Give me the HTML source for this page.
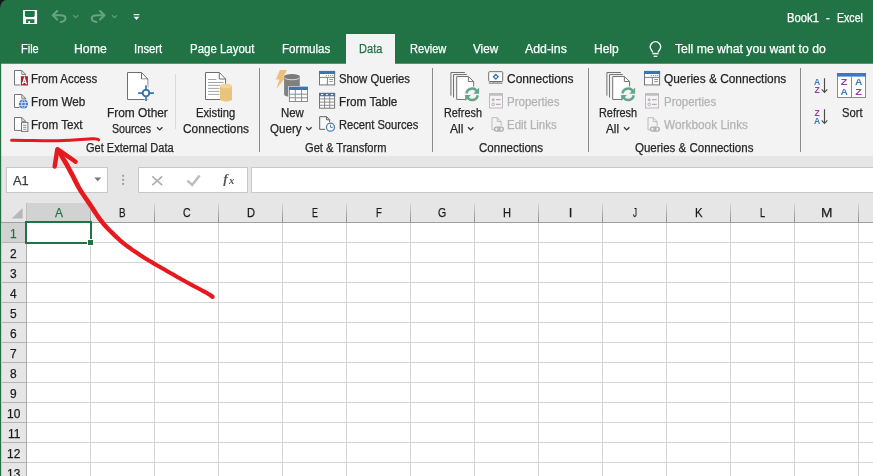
<!DOCTYPE html>
<html><head><meta charset="utf-8"><title>Book1 - Excel</title>
<style>
html,body{margin:0;padding:0;}
#txt{position:absolute;left:0;top:0;width:873px;height:476px;will-change:transform;}
body{width:873px;height:476px;position:relative;overflow:hidden;background:#fff;font-family:"Liberation Sans",sans-serif;}
.t{position:absolute;white-space:nowrap;line-height:16px;transform-origin:0 0;font-family:"Liberation Sans",sans-serif;-webkit-text-stroke:0.25px;}
svg{position:absolute;left:0;top:0;}
</style></head><body>
<div style="position:absolute;left:0px;top:0px;width:873px;height:63px;background:#217346;"></div>
<div style="position:absolute;left:0px;top:63px;width:873px;height:1px;background:#569371;"></div>
<div style="position:absolute;left:0px;top:64px;width:873px;height:92px;background:#f3f3f3;"></div>
<div style="position:absolute;left:0px;top:156px;width:873px;height:47px;background:#e6e6e6;"></div>
<div style="position:absolute;left:0px;top:203px;width:873px;height:273px;background:#ffffff;"></div>
<div style="position:absolute;left:346px;top:34px;width:49px;height:31px;background:#f3f3f3;"></div>
<div style="position:absolute;left:259px;top:68px;width:1px;height:84px;background:#8a8a8a;"></div>
<div style="position:absolute;left:432px;top:68px;width:1px;height:84px;background:#8a8a8a;"></div>
<div style="position:absolute;left:588px;top:68px;width:1px;height:84px;background:#8a8a8a;"></div>
<div style="position:absolute;left:800px;top:68px;width:1px;height:84px;background:#8a8a8a;"></div>
<div style="position:absolute;left:175px;top:74px;width:1px;height:55px;background:#dadada;"></div>
<div style="position:absolute;left:6px;top:167px;width:102px;height:26px;background:#fff;box-sizing:border-box;border:1px solid #c8c8c8;"></div>
<div style="position:absolute;left:138px;top:167px;width:110px;height:26px;background:#fff;box-sizing:border-box;border:1px solid #c8c8c8;"></div>
<div style="position:absolute;left:251px;top:167px;width:630px;height:26px;background:#fff;box-sizing:border-box;border:1px solid #c8c8c8;"></div>
<div style="position:absolute;left:0px;top:203px;width:873px;height:19px;background:#e6e6e6;"></div>
<div style="position:absolute;left:0px;top:222px;width:27px;height:254px;background:#e6e6e6;"></div>
<div style="position:absolute;left:27px;top:203px;width:63px;height:19px;background:#d2d2d2;"></div>
<div style="position:absolute;left:2px;top:223px;width:24px;height:19px;background:#d2d2d2;"></div>
<div style="position:absolute;left:0px;top:222px;width:873px;height:1px;background:#9f9f9f;"></div>
<div style="position:absolute;left:26px;top:203px;width:1px;height:19px;background:#c0c0c0;"></div>
<div style="position:absolute;left:26px;top:223px;width:1px;height:253px;background:#aeaeae;"></div>
<div style="position:absolute;left:90px;top:203px;width:1px;height:19px;background:#b4b4b4;background:linear-gradient(#dadada,#8e8e8e);"></div>
<div style="position:absolute;left:90px;top:223px;width:1px;height:253px;background:#d4d4d4;"></div>
<div style="position:absolute;left:154px;top:203px;width:1px;height:19px;background:#b4b4b4;background:linear-gradient(#dadada,#8e8e8e);"></div>
<div style="position:absolute;left:154px;top:223px;width:1px;height:253px;background:#d4d4d4;"></div>
<div style="position:absolute;left:218px;top:203px;width:1px;height:19px;background:#b4b4b4;background:linear-gradient(#dadada,#8e8e8e);"></div>
<div style="position:absolute;left:218px;top:223px;width:1px;height:253px;background:#d4d4d4;"></div>
<div style="position:absolute;left:282px;top:203px;width:1px;height:19px;background:#b4b4b4;background:linear-gradient(#dadada,#8e8e8e);"></div>
<div style="position:absolute;left:282px;top:223px;width:1px;height:253px;background:#d4d4d4;"></div>
<div style="position:absolute;left:346px;top:203px;width:1px;height:19px;background:#b4b4b4;background:linear-gradient(#dadada,#8e8e8e);"></div>
<div style="position:absolute;left:346px;top:223px;width:1px;height:253px;background:#d4d4d4;"></div>
<div style="position:absolute;left:410px;top:203px;width:1px;height:19px;background:#b4b4b4;background:linear-gradient(#dadada,#8e8e8e);"></div>
<div style="position:absolute;left:410px;top:223px;width:1px;height:253px;background:#d4d4d4;"></div>
<div style="position:absolute;left:474px;top:203px;width:1px;height:19px;background:#b4b4b4;background:linear-gradient(#dadada,#8e8e8e);"></div>
<div style="position:absolute;left:474px;top:223px;width:1px;height:253px;background:#d4d4d4;"></div>
<div style="position:absolute;left:538px;top:203px;width:1px;height:19px;background:#b4b4b4;background:linear-gradient(#dadada,#8e8e8e);"></div>
<div style="position:absolute;left:538px;top:223px;width:1px;height:253px;background:#d4d4d4;"></div>
<div style="position:absolute;left:602px;top:203px;width:1px;height:19px;background:#b4b4b4;background:linear-gradient(#dadada,#8e8e8e);"></div>
<div style="position:absolute;left:602px;top:223px;width:1px;height:253px;background:#d4d4d4;"></div>
<div style="position:absolute;left:666px;top:203px;width:1px;height:19px;background:#b4b4b4;background:linear-gradient(#dadada,#8e8e8e);"></div>
<div style="position:absolute;left:666px;top:223px;width:1px;height:253px;background:#d4d4d4;"></div>
<div style="position:absolute;left:730px;top:203px;width:1px;height:19px;background:#b4b4b4;background:linear-gradient(#dadada,#8e8e8e);"></div>
<div style="position:absolute;left:730px;top:223px;width:1px;height:253px;background:#d4d4d4;"></div>
<div style="position:absolute;left:794px;top:203px;width:1px;height:19px;background:#b4b4b4;background:linear-gradient(#dadada,#8e8e8e);"></div>
<div style="position:absolute;left:794px;top:223px;width:1px;height:253px;background:#d4d4d4;"></div>
<div style="position:absolute;left:858px;top:203px;width:1px;height:19px;background:#b4b4b4;background:linear-gradient(#dadada,#8e8e8e);"></div>
<div style="position:absolute;left:858px;top:223px;width:1px;height:253px;background:#d4d4d4;"></div>
<div style="position:absolute;left:27px;top:242px;width:846px;height:1px;background:#d4d4d4;"></div>
<div style="position:absolute;left:2px;top:242px;width:24px;height:1px;background:#b4b4b4;"></div>
<div style="position:absolute;left:27px;top:262px;width:846px;height:1px;background:#d4d4d4;"></div>
<div style="position:absolute;left:2px;top:262px;width:24px;height:1px;background:#b4b4b4;"></div>
<div style="position:absolute;left:27px;top:282px;width:846px;height:1px;background:#d4d4d4;"></div>
<div style="position:absolute;left:2px;top:282px;width:24px;height:1px;background:#b4b4b4;"></div>
<div style="position:absolute;left:27px;top:302px;width:846px;height:1px;background:#d4d4d4;"></div>
<div style="position:absolute;left:2px;top:302px;width:24px;height:1px;background:#b4b4b4;"></div>
<div style="position:absolute;left:27px;top:322px;width:846px;height:1px;background:#d4d4d4;"></div>
<div style="position:absolute;left:2px;top:322px;width:24px;height:1px;background:#b4b4b4;"></div>
<div style="position:absolute;left:27px;top:342px;width:846px;height:1px;background:#d4d4d4;"></div>
<div style="position:absolute;left:2px;top:342px;width:24px;height:1px;background:#b4b4b4;"></div>
<div style="position:absolute;left:27px;top:362px;width:846px;height:1px;background:#d4d4d4;"></div>
<div style="position:absolute;left:2px;top:362px;width:24px;height:1px;background:#b4b4b4;"></div>
<div style="position:absolute;left:27px;top:382px;width:846px;height:1px;background:#d4d4d4;"></div>
<div style="position:absolute;left:2px;top:382px;width:24px;height:1px;background:#b4b4b4;"></div>
<div style="position:absolute;left:27px;top:402px;width:846px;height:1px;background:#d4d4d4;"></div>
<div style="position:absolute;left:2px;top:402px;width:24px;height:1px;background:#b4b4b4;"></div>
<div style="position:absolute;left:27px;top:422px;width:846px;height:1px;background:#d4d4d4;"></div>
<div style="position:absolute;left:2px;top:422px;width:24px;height:1px;background:#b4b4b4;"></div>
<div style="position:absolute;left:27px;top:442px;width:846px;height:1px;background:#d4d4d4;"></div>
<div style="position:absolute;left:2px;top:442px;width:24px;height:1px;background:#b4b4b4;"></div>
<div style="position:absolute;left:27px;top:462px;width:846px;height:1px;background:#d4d4d4;"></div>
<div style="position:absolute;left:2px;top:462px;width:24px;height:1px;background:#b4b4b4;"></div>
<div style="position:absolute;left:25px;top:221px;width:63px;height:19px;border:2px solid #217346;"></div>
<div style="position:absolute;left:87px;top:239px;width:7px;height:7px;background:#fff;"></div>
<div style="position:absolute;left:88px;top:240px;width:5px;height:5px;background:#217346;"></div>
<div style="position:absolute;left:0px;top:63px;width:1px;height:413px;background:#217346;"></div>
<div style="position:absolute;left:1px;top:64px;width:1px;height:412px;background:#217346;opacity:.18"></div>
<div id="txt">
<span class="t" style="left:787.30px;top:10.00px;font-size:12px;color:#fff;transform:scaleX(0.9412);">Book1</span>
<span class="t" style="left:826.40px;top:10.00px;font-size:12px;color:#fff;transform:scaleX(0.9500);">-</span>
<span class="t" style="left:837.30px;top:10.00px;font-size:12px;color:#fff;transform:scaleX(0.8817);">Excel</span>
<span class="t" style="left:21.40px;top:41.00px;font-size:12.5px;color:#fff;transform:scaleX(0.8795);">File</span>
<span class="t" style="left:74.30px;top:41.00px;font-size:12.5px;color:#fff;transform:scaleX(0.9828);">Home</span>
<span class="t" style="left:134.30px;top:41.00px;font-size:12.5px;color:#fff;transform:scaleX(0.9024);">Insert</span>
<span class="t" style="left:190.40px;top:41.00px;font-size:12.5px;color:#fff;transform:scaleX(0.9175);">Page Layout</span>
<span class="t" style="left:282.30px;top:41.00px;font-size:12.5px;color:#fff;transform:scaleX(0.9285);">Formulas</span>
<span class="t" style="left:358.70px;top:41.00px;font-size:12.5px;color:#217346;transform:scaleX(0.8851);">Data</span>
<span class="t" style="left:409.60px;top:41.00px;font-size:12.5px;color:#fff;transform:scaleX(0.8854);">Review</span>
<span class="t" style="left:472.90px;top:41.00px;font-size:12.5px;color:#fff;transform:scaleX(0.9377);">View</span>
<span class="t" style="left:525.10px;top:41.00px;font-size:12.5px;color:#fff;transform:scaleX(0.9864);">Add-ins</span>
<span class="t" style="left:594.40px;top:41.00px;font-size:12.5px;color:#fff;transform:scaleX(0.9616);">Help</span>
<span class="t" style="left:675.40px;top:41.00px;font-size:12.5px;color:#fff;transform:scaleX(0.9776);">Tell me what you want to do</span>
<span class="t" style="left:31.30px;top:71.00px;font-size:12px;color:#262626;transform:scaleX(0.9542);">From Access</span>
<span class="t" style="left:31.30px;top:94.00px;font-size:12px;color:#262626;transform:scaleX(0.9729);">From Web</span>
<span class="t" style="left:31.30px;top:117.00px;font-size:12px;color:#262626;transform:scaleX(0.9713);">From Text</span>
<span class="t" style="left:107.20px;top:105.00px;font-size:12px;color:#262626;transform:scaleX(0.9916);">From Other</span>
<span class="t" style="left:112.40px;top:121.00px;font-size:12px;color:#262626;transform:scaleX(0.8886);">Sources</span>
<span class="t" style="left:196.40px;top:105.00px;font-size:12px;color:#262626;transform:scaleX(0.9333);">Existing</span>
<span class="t" style="left:182.80px;top:121.00px;font-size:12px;color:#262626;transform:scaleX(0.9897);">Connections</span>
<span class="t" style="left:85.60px;top:140.00px;font-size:12px;color:#262626;transform:scaleX(0.9185);">Get External Data</span>
<span class="t" style="left:280.70px;top:105.00px;font-size:12px;color:#262626;transform:scaleX(0.9517);">New</span>
<span class="t" style="left:270.40px;top:121.00px;font-size:12px;color:#262626;transform:scaleX(0.9667);">Query</span>
<span class="t" style="left:338.70px;top:71.00px;font-size:12px;color:#262626;transform:scaleX(0.9420);">Show Queries</span>
<span class="t" style="left:338.70px;top:94.00px;font-size:12px;color:#262626;transform:scaleX(0.9764);">From Table</span>
<span class="t" style="left:338.70px;top:117.00px;font-size:12px;color:#262626;transform:scaleX(0.9288);">Recent Sources</span>
<span class="t" style="left:305.00px;top:140.00px;font-size:12px;color:#262626;transform:scaleX(0.9250);">Get &amp; Transform</span>
<span class="t" style="left:443.70px;top:105.00px;font-size:12px;color:#262626;transform:scaleX(0.9024);">Refresh</span>
<span class="t" style="left:450.30px;top:121.00px;font-size:12px;color:#262626;transform:scaleX(1.0066);">All</span>
<span class="t" style="left:507.40px;top:71.00px;font-size:12px;color:#262626;transform:scaleX(0.9972);">Connections</span>
<span class="t" style="left:507.40px;top:94.00px;font-size:12px;color:#b3b3b3;transform:scaleX(0.9600);">Properties</span>
<span class="t" style="left:507.40px;top:117.00px;font-size:12px;color:#b3b3b3;transform:scaleX(0.9538);">Edit Links</span>
<span class="t" style="left:478.60px;top:140.00px;font-size:12px;color:#262626;transform:scaleX(0.9597);">Connections</span>
<span class="t" style="left:599.30px;top:105.00px;font-size:12px;color:#262626;transform:scaleX(0.9071);">Refresh</span>
<span class="t" style="left:606.30px;top:121.00px;font-size:12px;color:#262626;transform:scaleX(0.9765);">All</span>
<span class="t" style="left:663.60px;top:71.00px;font-size:12px;color:#262626;transform:scaleX(0.9905);">Queries &amp; Connections</span>
<span class="t" style="left:663.60px;top:94.00px;font-size:12px;color:#b3b3b3;transform:scaleX(0.9527);">Properties</span>
<span class="t" style="left:663.60px;top:117.00px;font-size:12px;color:#b3b3b3;transform:scaleX(0.9868);">Workbook Links</span>
<span class="t" style="left:635.00px;top:140.00px;font-size:12px;color:#262626;transform:scaleX(0.9597);">Queries &amp; Connections</span>
<span class="t" style="left:841.50px;top:105.00px;font-size:12px;color:#262626;transform:scaleX(0.9318);">Sort</span>
<span class="t" style="left:13.20px;top:172.60px;font-size:12.5px;color:#3a3a3a;transform:scaleX(1.0318);">A1</span>
<span class="t" style="left:54.50px;top:205.00px;font-size:13px;color:#217346;transform:scaleX(0.9209);">A</span>
<span class="t" style="left:119.20px;top:205.00px;font-size:13px;color:#1c1c1c;transform:scaleX(0.7597);">B</span>
<span class="t" style="left:182.70px;top:205.00px;font-size:13px;color:#1c1c1c;transform:scaleX(0.8107);">C</span>
<span class="t" style="left:246.50px;top:205.00px;font-size:13px;color:#1c1c1c;transform:scaleX(0.8533);">D</span>
<span class="t" style="left:311.55px;top:205.00px;font-size:13px;color:#1c1c1c;transform:scaleX(0.6791);">E</span>
<span class="t" style="left:375.60px;top:205.00px;font-size:13px;color:#1c1c1c;transform:scaleX(0.7307);">F</span>
<span class="t" style="left:438.40px;top:205.00px;font-size:13px;color:#1c1c1c;transform:scaleX(0.8099);">G</span>
<span class="t" style="left:502.50px;top:205.00px;font-size:13px;color:#1c1c1c;transform:scaleX(0.8533);">H</span>
<span class="t" style="left:568.69px;top:205.00px;font-size:13px;color:#1c1c1c;transform:scaleX(1.0000);">I</span>
<span class="t" style="left:632.50px;top:205.00px;font-size:13px;color:#1c1c1c;transform:scaleX(0.6154);">J</span>
<span class="t" style="left:694.70px;top:205.00px;font-size:13px;color:#1c1c1c;transform:scaleX(0.8748);">K</span>
<span class="t" style="left:759.90px;top:205.00px;font-size:13px;color:#1c1c1c;transform:scaleX(0.7172);">L</span>
<span class="t" style="left:820.80px;top:205.00px;font-size:13px;color:#1c1c1c;transform:scaleX(1.0543);">M</span>
<span class="t" style="left:10.46px;top:226.00px;font-size:13px;color:#217346;transform:scaleX(0.9200);">1</span>
<span class="t" style="left:10.46px;top:246.00px;font-size:13px;color:#1c1c1c;transform:scaleX(0.9200);">2</span>
<span class="t" style="left:10.46px;top:266.00px;font-size:13px;color:#1c1c1c;transform:scaleX(0.9200);">3</span>
<span class="t" style="left:10.46px;top:286.00px;font-size:13px;color:#1c1c1c;transform:scaleX(0.9200);">4</span>
<span class="t" style="left:10.46px;top:306.00px;font-size:13px;color:#1c1c1c;transform:scaleX(0.9200);">5</span>
<span class="t" style="left:10.46px;top:326.00px;font-size:13px;color:#1c1c1c;transform:scaleX(0.9200);">6</span>
<span class="t" style="left:10.46px;top:346.00px;font-size:13px;color:#1c1c1c;transform:scaleX(0.9200);">7</span>
<span class="t" style="left:10.46px;top:366.00px;font-size:13px;color:#1c1c1c;transform:scaleX(0.9200);">8</span>
<span class="t" style="left:10.46px;top:386.00px;font-size:13px;color:#1c1c1c;transform:scaleX(0.9200);">9</span>
<span class="t" style="left:7.16px;top:406.00px;font-size:13px;color:#1c1c1c;transform:scaleX(0.9200);">10</span>
<span class="t" style="left:7.59px;top:426.00px;font-size:13px;color:#1c1c1c;transform:scaleX(0.9200);">11</span>
<span class="t" style="left:7.16px;top:446.00px;font-size:13px;color:#1c1c1c;transform:scaleX(0.9200);">12</span>
<span class="t" style="left:7.16px;top:466.00px;font-size:13px;color:#1c1c1c;transform:scaleX(0.9200);">13</span>
</div>
<svg width="873" height="476" viewBox="0 0 873 476" style="font-family:'Liberation Sans',sans-serif">
<defs>
  <!-- chevron -->
  <path id="chev" d="M0,0.3 L2.7,2.9 L5.4,0.3" fill="none" stroke="#333" stroke-width="1.3"/>
  <!-- queries icon 16x13.5 -->
  <g id="qry"><rect x="0.5" y="0.5" width="15.1" height="13.4" fill="#fff" stroke="#757575"/><rect x="0" y="-0.1" width="16.1" height="3.1" fill="#3d74b5"/><path d="M0.5,6.4 H15.6 M8.4,6.4 V13.9" stroke="#757575" stroke-width="0.9"/><path d="M6.9,4.6 h1.1 m1,0 h1.1 m1,0 h1.1 m1,0 h1.1" stroke="#7a7a7a" stroke-width="0.9"/><path d="M10.2,8.5 h3.8 M10.2,10.6 h3.8" stroke="#8a8a8a" stroke-width="0.9"/></g>
  <!-- refresh all big icon, origin at 450,71 -->
  <g id="rfr">
    <path d="M0.9,24.7 V1.5 H14.9" fill="none" stroke="#727272" stroke-width="1"/>
    <path d="M3.5,26.5 V3.55 H16.8" fill="none" stroke="#727272" stroke-width="1"/>
    <path d="M6.7,5.55 H18.4 L23.65,10.55 V28.45 H6.7 Z" fill="#fff" stroke="#727272" stroke-width="1"/>
    <path d="M18.4,5.55 V10.55 H23.65" fill="none" stroke="#727272" stroke-width="1"/>
    <circle cx="22.1" cy="23.3" r="8" fill="#f3f3f3"/>
    <path d="M14,15 h16 v13.4 h-16z" fill="none"/>
    <path d="M16.5,22.4 A5.6,5.6 0 0 1 26.9,20.4" fill="none" stroke="#63a78b" stroke-width="2.5"/>
    <path d="M29.1,16.6 V22.8 H23.4 Z" fill="#63a78b"/>
    <path d="M27.7,24.2 A5.6,5.6 0 0 1 17.3,26.2" fill="none" stroke="#63a78b" stroke-width="2.5"/>
    <path d="M15.2,30.1 V23.9 H20.9 Z" fill="#63a78b"/>
  </g>
  <!-- properties disabled icon 14x15 -->
  <g id="prp"><rect x="0.5" y="0.5" width="13" height="14.5" fill="#f6f2f6" stroke="#bfbabf"/><rect x="0" y="0" width="14" height="2.8" fill="#c0c0c0"/><circle cx="4.2" cy="6.7" r="1.5" fill="#bcbcbc"/><circle cx="4.2" cy="11.3" r="1.3" fill="none" stroke="#b2b2b2" stroke-width="1"/><path d="M7,6.7 h4.7 M7,11.3 h4.7" stroke="#b2b2b2" stroke-width="1.2"/></g>
  <!-- links disabled icon -->
  <g id="lnk"><path d="M0.5,0.5 H5.8 L9.6,4.4 V8.6 M0.5,0.5 V12.6 H2.6" fill="#f6f2f6" stroke="#bfbabf"/><path d="M5.8,0.5 V4.4 H9.6" fill="none" stroke="#bfbabf"/><rect x="3" y="9.9" width="5.4" height="4" rx="2" fill="none" stroke="#aeaeae" stroke-width="1.4"/><rect x="6.4" y="9.9" width="5.4" height="4" rx="2" fill="none" stroke="#aeaeae" stroke-width="1.4"/></g>
</defs>

<!-- window corner -->
<path d="M0,0 H6.5 A6.5,8.5 0 0 0 0,8.5 Z" fill="#17151f"/>

<!-- ===== QAT ===== -->
<rect x="23" y="10.1" width="14.1" height="13.9" rx="0.6" fill="#fdfbfc"/>
<path d="M24.9,11 H34.7 V16 L33.7,17.1 H26.2 L24.9,16 Z" fill="#217346"/>
<path d="M26.1,19.2 H34.4 V22.9 H30.1 V21 H28.3 V22.9 H26.1 Z" fill="#217346"/>
<g fill="none" stroke="#69a283" stroke-width="2.1" stroke-linecap="round" stroke-linejoin="round">
  <path d="M57.2,11 L52.8,15.3 L57.2,19.6"/>
  <path d="M53.4,15.3 H60.2 C66.8,15.3 67.4,20.6 60.8,22"/>
  <path d="M100,11 L104.4,15.3 L100,19.6"/>
  <path d="M103.8,15.3 H97 C90.4,15.3 89.8,20.6 96.4,22"/>
</g>
<g fill="none" stroke="#5f9c7b" stroke-width="1.3">
  <path d="M73.2,15.2 L75.7,17.7 L78.2,15.2"/>
  <path d="M112,15.2 L114.5,17.7 L117,15.2"/>
</g>
<rect x="133.6" y="14.1" width="5.8" height="1.1" fill="#fff"/>
<path d="M133.6,16.8 H139.4 L136.5,20 Z" fill="#fff"/>

<!-- bulb -->
<g fill="none" stroke="#fff" stroke-width="1.4">
  <path d="M652.7,52.6 C652.7,50.4 650.2,49.6 650.2,46.9 A5.25,5.25 0 0 1 660.7,46.9 C660.7,49.6 658.2,50.4 658.2,52.6"/>
  <path d="M652.4,53.6 H658.5" stroke-width="1.5"/>
  <path d="M653.6,56.3 H657.3" stroke-width="1.2"/>
</g>

<!-- ===== Get External Data ===== -->
<g fill="#fff" stroke="#757575" stroke-width="1">
  <path d="M14.5,70.5 H21.8 L25.6,74.3 V85 H14.5 Z"/><path d="M21.8,70.5 V74.3 H25.6" fill="none"/>
  <path d="M14.5,94.5 H21.8 L25.6,98.3 V107.5 H14.5 Z"/><path d="M21.8,94.5 V98.3 H25.6" fill="none"/>
  <path d="M14.5,117.5 H21.8 L25.6,121.3 V130.4 H14.5 Z"/><path d="M21.8,117.5 V121.3 H25.6" fill="none"/>
</g>
<rect x="20.3" y="75.6" width="8.2" height="10.4" fill="#f3f3f3"/>
<rect x="20.9" y="76.2" width="7" height="9.3" fill="#a4262c"/>
<path d="M22.4,84.3 L24.4,78 L26.4,84.3 M23,82.3 H25.8" fill="none" stroke="#fff" stroke-width="1.25"/>
<circle cx="23.5" cy="104" r="5.3" fill="#f3f3f3"/>
<circle cx="23.5" cy="104" r="4.6" fill="#3b78c3"/>
<g fill="none" stroke="#dfe9f6" stroke-width="0.85"><ellipse cx="23.5" cy="104" rx="1.8" ry="4"/><path d="M19.2,102.6 H27.8 M19.2,105.4 H27.8"/></g>
<rect x="21" y="122.1" width="7.4" height="9.8" fill="#f3f3f3"/>
<rect x="21.5" y="122.6" width="6.4" height="8.8" fill="#fff" stroke="#757575"/>
<path d="M23.1,125.3 h3.3 M23.1,127.3 h3.3 M23.1,129.3 h3.3" stroke="#808080" stroke-width="0.9"/>

<!-- from other sources -->
<path d="M127.5,72.5 H141.5 L147.8,79 V99.5 H127.5 Z" fill="#fff" stroke="#6e6e6e"/>
<path d="M141.5,72.5 V79 H147.8" fill="none" stroke="#6e6e6e"/>
<circle cx="146" cy="93.1" r="6.2" fill="#f3f3f3"/>
<rect x="137.4" y="91.6" width="17.2" height="3" fill="#f3f3f3"/>
<rect x="144.5" y="84.5" width="3" height="17.2" fill="#f3f3f3"/>
<path d="M128,79.5 H147.3 V99 H128 Z" fill="#fff"/>
<circle cx="146" cy="93.1" r="3.3" fill="#fff" stroke="#3573b5" stroke-width="1.9"/>
<path d="M138.2,93.1 H142 M150,93.1 H153.9 M146,85.2 V89.2 M146,97 V101" stroke="#3573b5" stroke-width="1.6"/>
<use href="#chev" x="157" y="127"/>

<!-- existing connections -->
<path d="M205.5,72.5 H219.3 L225.6,79 V99.5 H205.5 Z" fill="#fff" stroke="#6e6e6e"/>
<path d="M219.3,72.5 V79 H225.6" fill="none" stroke="#6e6e6e"/>
<path d="M208,79.5 h8.2 M208,82.5 h15.6 M208,85.4 h12 M208,88.4 h11.5 M208,91.4 h11.5 M208,94.4 h11.5" stroke="#9a9a9a" stroke-width="0.9"/>
<path d="M220,86 V99.2 A6,2.3 0 0 0 232,99.2 V86 Z" fill="#e9c47c"/>
<ellipse cx="226" cy="86" rx="6" ry="2.3" fill="#f1d59a"/>

<!-- new query -->
<path d="M280,70 H286.9 L283.3,77.6 H285.6 L276.3,88.9 L279.4,79.6 H275.8 Z" fill="#ecc07a"/>
<path d="M284.1,76.5 V94.6 A7.85,2.4 0 0 0 299.8,94.6 V76.5 Z" fill="#808080"/>
<ellipse cx="291.95" cy="76.5" rx="7.85" ry="2.5" fill="#7a7a7a"/>
<path d="M284.4,77.6 A7.6,2.4 0 0 0 299.5,77.6" fill="none" stroke="#f0f0f0" stroke-width="0.8"/>
<rect x="288.2" y="86.1" width="20.5" height="16.6" fill="#f3f3f3"/>
<rect x="289.4" y="87.3" width="18.1" height="14.2" fill="#fff" stroke="#8c8c8c" stroke-width="1"/>
<rect x="288.9" y="86.8" width="19.1" height="3.2" fill="#3d74b5"/>
<path d="M295.3,90 V101.5 M301.6,90 V101.5 M289.4,94.2 H307.5 M289.4,97.8 H307.5" stroke="#8c8c8c" stroke-width="1"/>
<use href="#chev" x="306.2" y="127"/>

<use href="#qry" x="319" y="71"/>
<!-- from table -->
<rect x="319.5" y="93.4" width="15.1" height="14.8" fill="#fff" stroke="#757575"/>
<rect x="319" y="92.9" width="16.1" height="3.4" fill="#3d74b5"/>
<path d="M321,94.6 h2.2 M325.9,94.6 h2.2 M330.9,94.6 h2.2" stroke="#fff" stroke-width="1"/>
<path d="M324.6,96.3 V108.2 M329.7,96.3 V108.2 M319.5,98.9 H334.6 M319.5,102.1 H334.6 M319.5,105.3 H334.6" stroke="#808080" stroke-width="0.9"/>
<!-- recent sources -->
<path d="M319.7,116.7 H326.6 L329.6,119.8 V129.3 H319.7 Z" fill="#fbfbfb"/>
<path d="M319.7,116.7 H326.6 L329.6,119.8 V122 M319.7,116.7 V129.3 H325 M326.6,116.7 V119.8 H329.6" fill="none" stroke="#5e5e5e"/>
<circle cx="330.45" cy="127.2" r="4" fill="#fafafa" stroke="#3f7dbd" stroke-width="1.25"/>
<path d="M330.5,124.7 V127.4 H332.8" fill="none" stroke="#7a7a7a" stroke-width="1"/>

<!-- ===== Connections ===== -->
<use href="#rfr" x="450" y="71"/>
<use href="#chev" x="468" y="127"/>
<rect x="488.7" y="71.7" width="14" height="9.8" rx="0.8" fill="#fff" stroke="#6e6e6e"/>
<path d="M488.8,83.1 H502.4" fill="none" stroke="#6e6e6e" stroke-width="1"/><path d="M493.6,81.6 v1.5 M497.8,81.6 v1.5" stroke="#8a8a8a" stroke-width="0.8"/>
<path d="M495.8,73.6 L499,76.8 L495.8,80 L492.6,76.8 Z" fill="#2f6fc0"/>
<rect x="494.8" y="75.8" width="2" height="2" fill="#fff"/>
<use href="#prp" x="489" y="93"/>
<use href="#lnk" x="491.5" y="117.2"/>

<!-- ===== Queries & Connections ===== -->
<use href="#rfr" x="606" y="71"/>
<use href="#chev" x="624" y="127"/>
<use href="#qry" x="644" y="71"/>
<use href="#prp" x="645" y="93"/>
<use href="#lnk" x="647.5" y="117.2"/>

<!-- ===== Sort ===== -->
<g font-weight="bold" font-size="8.6px" text-anchor="middle">
  <text x="817.1" y="84.6" fill="#3b78c3">A</text>
  <text x="817" y="92.7" fill="#9440a8">Z</text>
  <text x="817" y="115.5" fill="#9440a8">Z</text>
  <text x="817.1" y="123.7" fill="#3b78c3">A</text>
</g>
<g fill="none" stroke="#4c4c4c" stroke-width="1.15">
  <path d="M824.5,78.3 V92.4 M821.7,89.4 L824.5,92.4 L827.3,89.4"/>
  <path d="M824.5,109.3 V123.4 M821.7,120.4 L824.5,123.4 L827.3,120.4"/>
</g>
<rect x="837.5" y="73.5" width="28" height="24" fill="#fff" stroke="#8a8a8a"/>
<rect x="837" y="73" width="29" height="3.6" fill="#3b78c3"/>
<path d="M851.5,76.6 V97.5" stroke="#8a8a8a"/>
<g font-weight="bold" font-size="9.5px" text-anchor="middle" lengthAdjust="spacingAndGlyphs">
  <text x="844" y="85.2" fill="#9440a8" textLength="6.6" lengthAdjust="spacingAndGlyphs">Z</text>
  <text x="844.2" y="95.4" fill="#3b78c3" textLength="7.4" lengthAdjust="spacingAndGlyphs">A</text>
  <text x="858.7" y="85.2" fill="#3b78c3" textLength="7.4" lengthAdjust="spacingAndGlyphs">A</text>
  <text x="858.6" y="95.4" fill="#9440a8" textLength="6.6" lengthAdjust="spacingAndGlyphs">Z</text>
</g>

<!-- ===== formula bar glyphs ===== -->
<path d="M94.3,177.5 H101.3 L97.8,181.2 Z" fill="#777"/>
<g fill="#9c9c9c"><rect x="122.2" y="174.8" width="1.9" height="1.9"/><rect x="122.2" y="178.9" width="1.9" height="1.9"/><rect x="122.2" y="183" width="1.9" height="1.9"/></g>
<path d="M152.3,176.3 L162.2,185.1 M162.2,176.3 L152.3,185.1" stroke="#b0b0b0" stroke-width="1.7" fill="none"/>
<path d="M187.5,180.6 L192.2,185 L199.6,175.6" stroke="#bdbdbd" stroke-width="2.5" fill="none"/>
<text x="223.2" y="182.8" font-family="Liberation Serif,serif" font-style="italic" font-weight="bold" font-size="13.5px" fill="#555">f</text>
<text x="229" y="184.3" font-family="Liberation Serif,serif" font-style="italic" font-weight="bold" font-size="10.5px" fill="#555">x</text>

<!-- select all triangle -->
<path d="M22.6,208 V218.6 H11.6 Z" fill="#b7b7b7"/>

<!-- ===== red annotation ===== -->
<path d="M55.7,149.5 L56.6,151.3 L57.5,153.0 L58.4,154.7 L59.3,156.5 L60.2,158.2 L61.1,159.8 L62.0,161.3 L63.0,162.9 L64.0,164.7 L65.1,166.6 L66.3,168.8 L67.6,171.2 L68.9,173.7 L70.3,176.3 L71.6,178.8 L72.9,181.4 L74.2,183.9 L75.5,186.5 L76.9,189.0 L78.4,191.6 L80.0,194.1 L81.7,196.6 L83.4,199.1 L85.1,201.5 L86.8,204.0 L88.5,206.5 L90.2,209.1 L91.9,211.7 L93.5,214.1 L95.0,216.3 L96.4,218.2 L97.6,219.9 L98.8,221.5 L99.8,222.8 L100.8,224.1 L101.6,225.1 L102.4,226.1 L103.3,227.0 L104.4,228.2 L105.9,229.8 L107.9,231.8 L110.4,234.3 L113.1,236.9 L115.9,239.5 L118.7,242.0 L121.3,244.3 L123.9,246.3 L126.5,248.2 L129.0,250.0 L131.5,251.8 L134.1,253.6 L136.7,255.3 L139.2,257.0 L141.6,258.5 L143.9,260.0 L146.1,261.3 L148.1,262.5 L150.0,263.6 L151.8,264.7 L153.6,265.8 L155.4,266.8 L157.2,267.8 L159.0,268.8 L161.1,270.0 L163.5,271.3 L166.2,272.9 L169.4,274.7 L172.6,276.6 L175.8,278.4 L178.7,280.0 L181.1,281.4 L183.3,282.6 L185.3,283.7 L187.2,284.8 L189.1,285.8 L191.1,286.9 L193.2,287.9 L195.2,289.0 L197.1,290.1 L199.0,291.1 L200.7,292.0 L202.4,292.9 L203.9,293.7 L205.3,294.5 L206.6,295.3 L207.7,296.0 L208.7,296.6 L209.6,297.3 L210.5,297.9 L211.3,298.5 L213.9,295.1 L213.0,294.4 L212.0,293.8 L211.1,293.1 L210.0,292.4 L208.8,291.7 L207.4,290.9 L205.9,290.1 L204.3,289.2 L202.6,288.4 L200.9,287.4 L199.0,286.5 L197.1,285.5 L195.0,284.4 L193.0,283.3 L191.0,282.3 L189.1,281.2 L187.2,280.2 L185.3,279.1 L183.1,277.9 L180.7,276.5 L177.8,274.9 L174.7,273.1 L171.4,271.2 L168.3,269.4 L165.5,267.7 L163.1,266.4 L161.0,265.2 L159.2,264.2 L157.5,263.2 L155.7,262.2 L153.9,261.1 L152.1,260.1 L150.2,258.9 L148.3,257.7 L146.2,256.4 L143.9,255.0 L141.5,253.4 L139.0,251.8 L136.5,250.1 L133.9,248.4 L131.5,246.6 L129.0,244.8 L126.5,242.9 L124.1,240.9 L121.5,238.7 L118.9,236.3 L116.2,233.7 L113.5,231.1 L111.1,228.7 L109.1,226.7 L107.7,225.1 L106.6,224.0 L105.9,223.1 L105.2,222.3 L104.4,221.2 L103.4,220.0 L102.4,218.7 L101.3,217.2 L100.1,215.6 L98.8,213.7 L97.4,211.5 L95.8,209.1 L94.2,206.6 L92.5,203.9 L90.7,201.3 L89.0,198.8 L87.3,196.4 L85.6,193.9 L83.9,191.5 L82.4,189.1 L81.0,186.7 L79.7,184.3 L78.4,181.8 L77.2,179.2 L75.9,176.7 L74.5,174.1 L73.2,171.5 L71.8,168.9 L70.5,166.5 L69.3,164.2 L68.2,162.3 L67.1,160.5 L66.1,158.9 L65.2,157.3 L64.2,155.7 L63.1,154.2 L62.0,152.6 L60.9,150.9 L59.8,149.3 L58.7,147.7 Z" fill="#e6191e"/>
<circle cx="212.6" cy="296.9" r="2.1" fill="#e6191e"/>
<g fill="none" stroke="#e6191e" stroke-linecap="round" stroke-linejoin="round">
  <path d="M11.6,140.2 C28,140.2 44,141 58,140.7 C72,140.3 84,139.2 92,138.7 C95.5,138.5 97.8,138.7 98.7,139.9" stroke-width="3"/>
  <path d="M57.3,149.6 L54.7,166.5" stroke-width="4.5"/>
  <path d="M57.8,149.2 L75.6,161.7" stroke-width="4.4"/>
</g>
<path d="M55.6,150.6 L57,147.6 L59.8,149.2 Z" fill="#e6191e"/>
</svg>

</body></html>
